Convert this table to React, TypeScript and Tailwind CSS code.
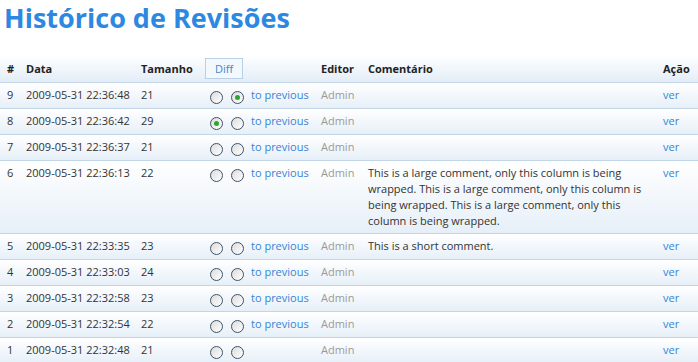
import React from 'react';

type Rev = {
  n: number;
  date: string;
  size: number;
  left: boolean;
  right: boolean;
  prev: boolean;
  comment?: string;
};

const revisions: Rev[] = [
  { n: 9, date: '2009-05-31 22:36:48', size: 21, left: false, right: true, prev: true },
  { n: 8, date: '2009-05-31 22:36:42', size: 29, left: true, right: false, prev: true },
  { n: 7, date: '2009-05-31 22:36:37', size: 21, left: false, right: false, prev: true },
  {
    n: 6,
    date: '2009-05-31 22:36:13',
    size: 22,
    left: false,
    right: false,
    prev: true,
    comment:
      'This is a large comment, only this column is being wrapped. This is a large comment, only this column is being wrapped. This is a large comment, only this column is being wrapped.',
  },
  { n: 5, date: '2009-05-31 22:33:35', size: 23, left: false, right: false, prev: true, comment: 'This is a short comment.' },
  { n: 4, date: '2009-05-31 22:33:03', size: 24, left: false, right: false, prev: true },
  { n: 3, date: '2009-05-31 22:32:58', size: 23, left: false, right: false, prev: true },
  { n: 2, date: '2009-05-31 22:32:54', size: 22, left: false, right: false, prev: true },
  { n: 1, date: '2009-05-31 22:32:48', size: 21, left: false, right: false, prev: false },
];

function Radio({ checked }: { checked: boolean }) {
  return (
    <span className="inline-flex h-[13px] w-[13px] shrink-0 items-center justify-center rounded-full border border-[#3f5468] bg-gradient-to-br from-[#dcdcdc] to-white align-middle">
      {checked && <span className="h-[5px] w-[5px] rounded-full bg-[#2fa52f]" />}
    </span>
  );
}

const cell = 'px-[7px] py-[4px] align-top whitespace-nowrap';

export default function App() {
  return (
    <div className="min-h-[362px] w-[698px] bg-white font-['Open_Sans',sans-serif] text-[11px] leading-[16px] text-[#333]">
      <h1 className="pl-[4px] pt-[1px] text-[27px] font-bold leading-[34px] text-[#2c88e0]">
        Histórico de Revisões
      </h1>
      <table className="mt-[20px] w-full table-fixed border-collapse">
        <colgroup>
          <col className="w-[19px]" />
          <col className="w-[115px]" />
          <col className="w-[64px]" />
          <col className="w-[116px]" />
          <col className="w-[47px]" />
          <col className="w-[295px]" />
          <col className="w-[42px]" />
        </colgroup>
        <thead>
          <tr className="border-b border-[#c3d6e8] bg-gradient-to-b from-white to-[#e3edf7] text-left font-bold text-[#222]">
            <th className="px-[7px] py-[3px] align-middle">#</th>
            <th className="px-[7px] py-[3px] align-middle">Data</th>
            <th className="px-[7px] py-[3px] align-middle">Tamanho</th>
            <th className="px-[7px] py-[3px] align-middle">
              <button className="h-[21px] w-[38px] border border-[#b9d1e8] bg-[#f3f8fd] text-[11px] font-normal text-[#3f86d0]">
                Diff
              </button>
            </th>
            <th className="px-[7px] py-[3px] align-middle">Editor</th>
            <th className="px-[7px] py-[3px] align-middle">Comentário</th>
            <th className="px-[7px] py-[3px] align-middle">Ação</th>
          </tr>
        </thead>
        <tbody>
          {revisions.map((r) => (
            <tr
              key={r.n}
              className="border-b border-[#c3d6e8] bg-gradient-to-b from-white to-[#e6eff8]"
            >
              <td className={cell}>{r.n}</td>
              <td className={cell}>{r.date}</td>
              <td className={cell}>{r.size}</td>
              <td className={cell}>
                <div className="flex items-start">
                  <span className="mt-[4px] ml-[5px] flex gap-[8px]">
                    <Radio checked={r.left} />
                    <Radio checked={r.right} />
                  </span>
                  {r.prev && (
                    <a href="#" className="ml-[7px] text-[#3584d6]">
                      to previous
                    </a>
                  )}
                </div>
              </td>
              <td className={`${cell} text-[#9a9a9a]`}>Admin</td>
              <td className="px-[7px] py-[4px] align-top">{r.comment}</td>
              <td className={cell}>
                <a href="#" className="text-[#3584d6]">
                  ver
                </a>
              </td>
            </tr>
          ))}
        </tbody>
      </table>
    </div>
  );
}
